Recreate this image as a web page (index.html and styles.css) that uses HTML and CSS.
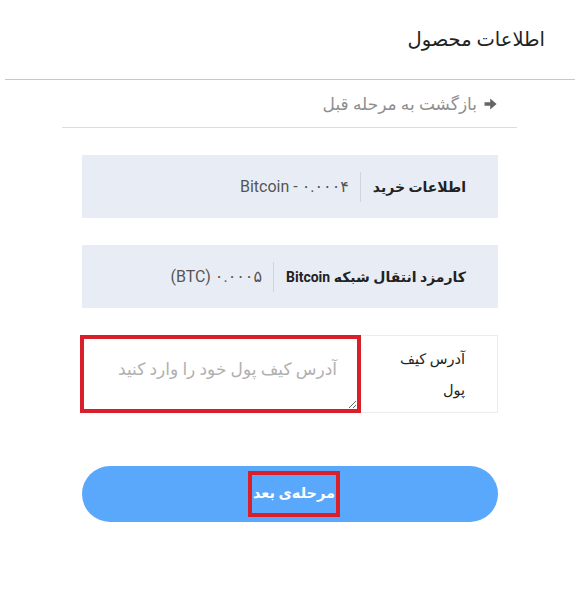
FILE: index.html
```html
<!DOCTYPE html>
<html lang="fa" dir="rtl">
<head>
  <meta charset="UTF-8">
  <meta name="viewport" content="width=device-width, initial-scale=1.0">
  <title>اطلاعات محصول</title>
  <link rel="stylesheet" href="styles.css">
</head>
<body>
  <div class="header">
    <h1>اطلاعات محصول</h1>
  </div>

  <div class="back">
    <a href="#" class="back-link">
      <svg class="back-icon" width="13" height="12" viewBox="0 0 13 12">
        <path d="M0.5 4.3 H6.2 V0.6 L12.6 6 L6.2 11.4 V7.7 H0.5 Z" fill="#666"/>
      </svg>
      بازگشت به مرحله قبل
    </a>
  </div>

  <form class="form">
    <div class="info-row">
      <span class="info-label">اطلاعات خرید</span>
      <span class="info-value" dir="ltr">Bitcoin - ۰.۰۰۰۴</span>
    </div>

    <div class="info-row">
      <span class="info-label">کارمزد انتقال شبکه Bitcoin</span>
      <span class="info-value" dir="ltr">(BTC) ۰.۰۰۰۵</span>
    </div>

    <div class="address-row">
      <label for="wallet" class="address-label">آدرس کیف پول</label>
      <textarea id="wallet" name="wallet" placeholder="آدرس کیف پول خود را وارد کنید"></textarea>
    </div>

    <button type="submit" class="button"><span class="button-text">مرحله‌ی بعد</span></button>
  </form>
</body>
</html>
```

FILE: styles.css
```css
body {
  font-family: Roboto, "DejaVu Sans", sans-serif;
  margin: 0;
  background: #fff;
  color: #222;
}

.header {
  margin: 0 6px 0 5px;
  height: 79px;
  border-bottom: 1px solid #c8c8c8;
  display: flex;
  align-items: center;
}

.header h1 {
  margin: 0 30px 0 0;
  font-size: 19.5px;
  font-weight: normal;
  color: #222;
}

.back {
  margin: 0 64px 0 62px;
  height: 47px;
  border-bottom: 1px solid #dcdcdc;
  display: flex;
  align-items: center;
}

.back-link {
  display: flex;
  align-items: center;
  gap: 7px;
  margin-right: 20px;
  color: #8f8f8f;
  font-size: 17px;
  text-decoration: none;
}

.form {
  margin: 27px 83px 0 82px;
  display: flex;
  flex-direction: column;
  gap: 27px;
}

.info-row {
  height: 63px;
  background: #e8edf5;
  display: flex;
  align-items: center;
  padding: 0 32px;
}

.info-label {
  font-size: 14px;
  font-weight: bold;
  color: #222;
  padding-left: 12px;
  line-height: 30px;
  border-left: 1px solid #d0d5dd;
}

.info-value {
  padding-right: 11px;
  font-size: 16px;
  color: #555;
}

.address-row {
  height: 76px;
  border: 1px solid #ececec;
  display: flex;
}

.address-label {
  width: 72px;
  padding: 8px 32px 0 32px;
  font-size: 14.5px;
  line-height: 31px;
  color: #222;
}

.address-row textarea {
  flex: 1;
  margin: -1px 0 -1px -3px;
  border: 4px solid #d81f2a;
  padding: 20px 20px 0 20px;
  direction: ltr;
  text-align: right;
  font-family: inherit;
  font-size: 17px;
  color: #333;
  resize: vertical;
  outline: none;
}

.address-row textarea::placeholder {
  color: #b0b0b0;
}

.button {
  margin-top: 26px;
  height: 56px;
  border: none;
  border-radius: 28px;
  background-color: #5aa8fb;
  display: flex;
  align-items: center;
  justify-content: center;
  cursor: pointer;
  font-family: inherit;
}

.button-text {
  display: block;
  width: 84px;
  height: 38px;
  margin-left: 8px;
  line-height: 38px;
  border: 4px solid #d81f2a;
  color: #fff;
  font-size: 14.5px;
  font-weight: bold;
  text-align: center;
}
```
